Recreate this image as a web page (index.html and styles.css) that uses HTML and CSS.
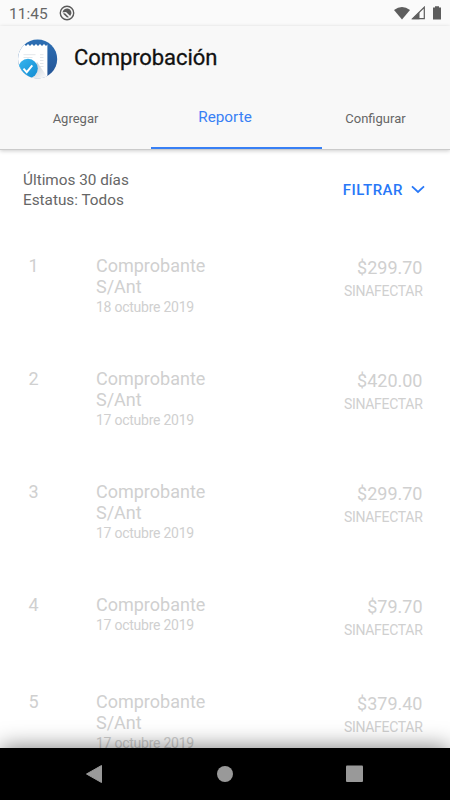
FILE: index.html
```
<!DOCTYPE html>
<html lang="es">
<head>
<meta charset="utf-8">
<title>Comprobación</title>
<link rel="stylesheet" href="styles.css">
</head>
<body>
<div class="screen">
  <div class="status">
    <span class="clock">11:45</span>
    <svg class="notif" width="16" height="16" viewBox="0 0 16 16"><circle cx="8" cy="8" r="6.700" fill="none" stroke="#5a5a5a" stroke-width="1.400"/><path d="M3.400 7.600C4 5 6 3.600 8 3.600c2.800 0 4.700 2.300 4.400 5L11.200 11 7 7z" fill="#5a5a5a"/><path d="M3.800 8.600L6 8.200l4 4-2 .3z" fill="#5a5a5a"/></svg>
    <svg class="signals" width="50" height="16" viewBox="0 0 50 16"><path d="M0 4Q8-1.800 16 4L8 13.500z" fill="#5d5d5d"/><path d="M18.600 12.600L30.300 1.200V12.600z" fill="#fafafa" stroke="#5d5d5d" stroke-width="1.200"/><path d="M18 13.200L25.500 6V13.200z" fill="#5d5d5d"/><path d="M39 1.500h2V.3h4v1.200h2v12h-8z" fill="#5d5d5d"/></svg>
  </div>
  <header class="header">
    <div class="brand">
      <svg class="logo" width="40" height="40" viewBox="0 0 40 40">
        <defs>
          <clipPath id="disc"><circle cx="19.600" cy="20" r="19.600"/></clipPath>
          <linearGradient id="blue" x1="0" y1="0" x2="0" y2="1"><stop offset="0" stop-color="#2c6fb4"/><stop offset="1" stop-color="#245394"/></linearGradient>
          <linearGradient id="cyan" x1="0" y1="0" x2="1" y2="1"><stop offset="0" stop-color="#38b5ee"/><stop offset="1" stop-color="#118bd2"/></linearGradient>
          <linearGradient id="shade" x1="0" y1="0" x2="1" y2="1"><stop offset="0" stop-color="#b6bfc9"/><stop offset="1" stop-color="#fff"/></linearGradient>
        </defs>
        <g clip-path="url(#disc)">
          <path d="M0 0h40v40H0z" fill="url(#blue)"/>
          <path d="M0 5h6l2 2 2-2 2 2 2-2 2 2 2-2 2 2 2-2 2 2 2-2 2 2 1.400-1.500V40H0z" fill="#fff"/>
          <path d="M19 23l10.400 15v2H10z" fill="url(#shade)"/>
          <path d="M5.500 15.700h12M5.500 18.500h9M22 15.700h3.500M22 18.500h3.500M22 21.500h3.500M22 24.500h3.500M22 27.500h3.500" stroke="#dce0e4" stroke-width=".8"/>
          <circle cx="10" cy="29.600" r="9.800" fill="url(#cyan)"/>
          <path d="M5.500 29.700l3.200 3.500L14.300 26.400" fill="none" stroke="#fff" stroke-width="1.900"/>
        </g>
      </svg>
      <h1 class="title">Comprobación</h1>
    </div>
    <nav class="tabs">
      <a class="tab">Agregar</a>
      <a class="tab active">Reporte</a>
      <a class="tab last">Configurar</a>
    </nav>
  </header>
  <main class="content">
    <section class="filter">
      <p class="summary">Últimos 30 días<br>Estatus: Todos</p>
      <div class="action">FILTRAR <svg width="14" height="9" viewBox="0 0 14 9"><path d="M1 1.300L7 7l6-5.700" fill="none" stroke="#2878f8" stroke-width="1.800"/></svg></div>
    </section>
    <ul class="list">
      <li class="item"><span class="num">1</span><div class="info"><div class="name">Comprobante S/Ant</div><div class="date">18 octubre 2019</div></div><div class="amount"><div class="price">$299.70</div><div class="state">SINAFECTAR</div></div></li>
      <li class="item"><span class="num">2</span><div class="info"><div class="name">Comprobante S/Ant</div><div class="date">17 octubre 2019</div></div><div class="amount"><div class="price">$420.00</div><div class="state">SINAFECTAR</div></div></li>
      <li class="item"><span class="num">3</span><div class="info"><div class="name">Comprobante S/Ant</div><div class="date">17 octubre 2019</div></div><div class="amount"><div class="price">$299.70</div><div class="state">SINAFECTAR</div></div></li>
      <li class="item short"><span class="num">4</span><div class="info"><div class="name">Comprobante</div><div class="date">17 octubre 2019</div></div><div class="amount"><div class="price">$79.70</div><div class="state">SINAFECTAR</div></div></li>
      <li class="item"><span class="num">5</span><div class="info"><div class="name">Comprobante S/Ant</div><div class="date">17 octubre 2019</div></div><div class="amount"><div class="price">$379.40</div><div class="state">SINAFECTAR</div></div></li>
    </ul>
  </main>
  <footer class="navbar">
    <svg width="450" height="52" viewBox="0 0 450 52"><path d="M86.500 26L101.500 17.500V34.500z" fill="#999" stroke="#999" stroke-linejoin="round"/><circle cx="225" cy="26" r="8" fill="#999"/><rect x="346" y="17.500" width="17" height="16.500" rx="1" fill="#999"/></svg>
  </footer>
</div>
</body>
</html>
```
FILE: styles.css
```
* { box-sizing: border-box; }
body { margin: 0; font-family: Roboto, "Liberation Sans", sans-serif; background: #fff; }
svg { display: block; flex: none; }
.screen { width: 450px; height: 800px; display: flex; flex-direction: column; overflow: hidden; }
.status { height: 26px; flex: none; display: flex; align-items: center; background: #fafafa; padding: 1px 6px 0 9px; }
.clock { width: 50px; font-size: 15.500px; color: #666; }
.notif { margin-bottom: 2px; }
.signals { margin-left: auto; }
.header { flex: none; height: 124px; background: #f8f8f8; border-bottom: 1px solid #cbcbcb; box-shadow: 0 1px 4px rgba(0,0,0,.2); position: relative; }
.brand { height: 65px; display: flex; align-items: center; padding-left: 18px; }
.title { margin: 0 0 1px 16px; font-size: 22px; line-height: 28px; font-weight: 400; letter-spacing: -0.080px; -webkit-text-stroke: 0.300px #111; color: #111; }
.tabs { height: 58px; display: grid; grid-template-columns: 151px 171px 1fr; }
.tab { display: flex; justify-content: center; align-items: center; font-size: 13px; color: #666; padding-bottom: 4px; }
.active { font-size: 15.300px; color: #3880f5; border-bottom: 2px solid #3880f5; padding-right: 23px; padding-bottom: 4px; }
.last { padding-right: 21px; }
.content { flex: 1; min-height: 0; overflow: hidden; }
.filter { height: 105px; display: flex; justify-content: space-between; padding: 20px 25px 0 23px; }
.summary { margin: 0; font-size: 15.300px; line-height: 20px; color: #666; }
.action { height: 39px; display: flex; align-items: center; gap: 8px; color: #2878f8; font-size: 15px; letter-spacing: 0.500px; font-weight: 500; }
.list { list-style: none; margin: 0; padding: 0; }
.item { display: flex; height: 113px; padding: 0 27.500px 0 28px; color: #d0d0d0; }
.item.short { height: 97px; }
.num { width: 68px; font-size: 18px; line-height: 21px; padding-left: 0.500px; }
.info { width: 120px; }
.name { font-size: 18px; line-height: 21px; }
.date { font-size: 14px; letter-spacing: -0.250px; line-height: 20px; }
.amount { margin-left: auto; text-align: right; padding-top: 2px; }
.price { font-size: 18px; line-height: 22px; }
.state { font-size: 14px; letter-spacing: -0.300px; line-height: 24px; }
.navbar { height: 52px; flex: none; background: #000; position: relative; box-shadow: 0 -2px 22px -1px rgba(0,0,0,.5); }
```
